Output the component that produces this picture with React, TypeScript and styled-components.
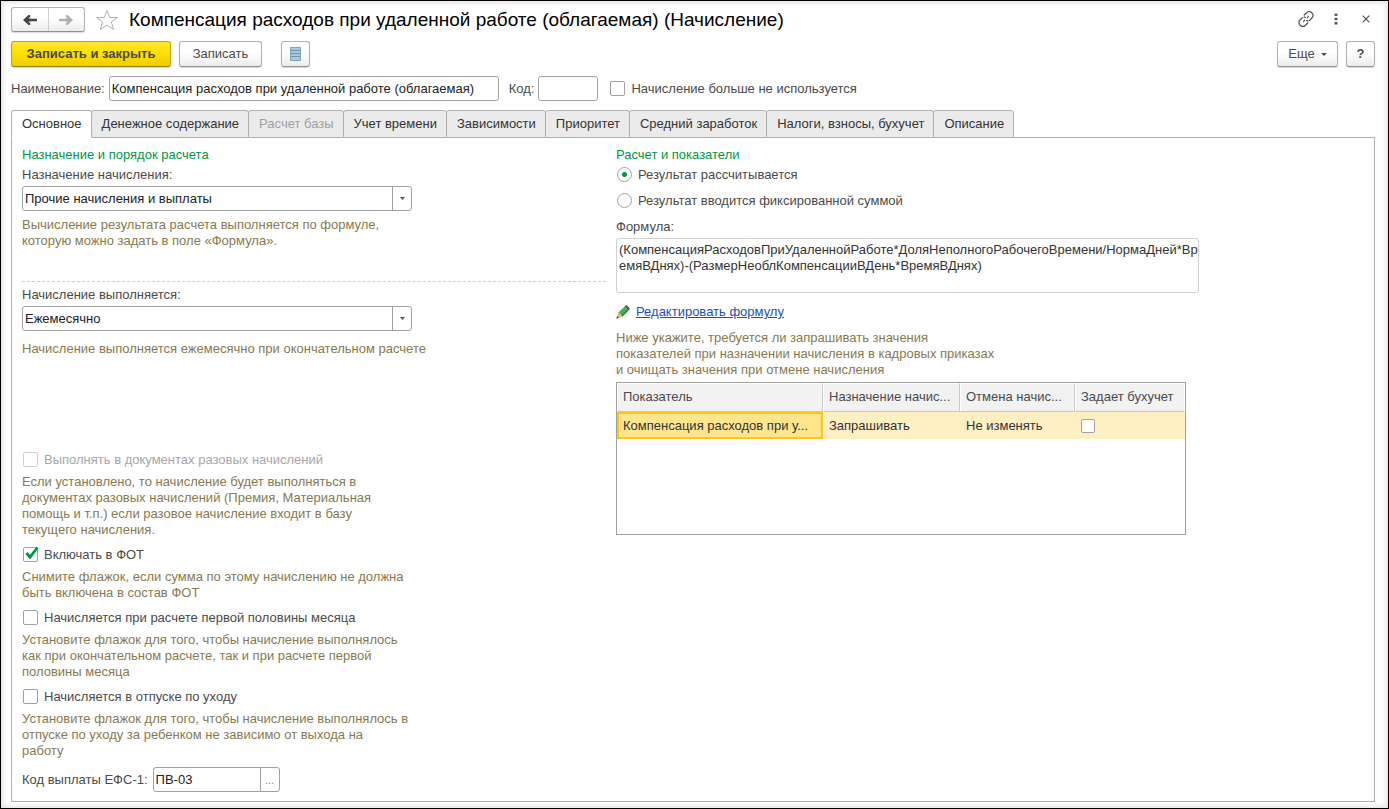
import React, { useState } from "react";
import styled, { createGlobalStyle, css } from "styled-components";

const GlobalStyle = createGlobalStyle`
  *, *::before, *::after { box-sizing: border-box; }
  body {
    margin: 0;
    background: #fff;
    color: #4a4a4a;
    font: 13px/16px "Liberation Sans", Arial, sans-serif;
  }
  button, input, select, textarea { font: inherit; color: inherit; margin: 0; }
  svg { flex: none; }
`;

const Window = styled.main`
  display: flex;
  flex-direction: column;
  min-height: 100vh;
  padding: 6px 13px 6px 10px;
  border: 1px solid #000;
  box-shadow: inset 0 0 5px 2px #e4e4e4;
`;

const TitleBar = styled.header`
  display: flex;
  align-items: center;
  height: 25px;
`;

const raised = css`
  border: 1px solid #b0b0b0;
  border-bottom-color: #8f8f8f;
  border-radius: 3px;
  background: linear-gradient(#fff 45%, #ececec);
  box-shadow: 0 1px 1px #d8d8d8;
`;

const NavGroup = styled.nav`
  ${raised}
  display: flex;
  width: 74px;
  height: 25px;
`;

const NavButton = styled.button`
  flex: 1;
  display: grid;
  place-items: center;
  padding: 0;
  border: 0;
  background: none;
  & + & { border-left: 1px solid #cfcfcf; }
`;

const StarButton = styled.button`
  display: grid;
  place-items: center;
  width: 24px;
  height: 24px;
  margin: 0 10px;
  padding: 0;
  border: 0;
  background: none;
`;

const Title = styled.h1`
  flex: 1;
  margin: 0;
  color: #000;
  font-size: 19px;
  font-weight: 400;
  line-height: 24px;
`;

const WindowTools = styled.div`
  display: flex;
  align-self: flex-start;
  gap: 12px;
`;

const ToolIcon = styled.button`
  display: grid;
  place-items: center;
  width: 18px;
  height: 24px;
  padding: 0;
  border: 0;
  background: none;
`;

const CommandBar = styled.div`
  display: flex;
  align-items: center;
  gap: 8px;
  margin-top: 9px;
`;

const Button = styled.button<{ $primary?: boolean; $width: number }>`
  ${raised}
  display: flex;
  align-items: center;
  justify-content: center;
  gap: 6px;
  height: 26px;
  width: ${(p) => p.$width}px;
  padding: 0;
  ${(p) =>
    p.$primary &&
    css`
      border-color: #bfa300;
      border-bottom-color: #978100;
      background: linear-gradient(#ffe92e, #ffde00 50%, #efcd00);
      font-weight: 700;
    `}
`;

const Spacer = styled.div<{ $width?: number }>`
  ${(p) => (p.$width ? `width: ${p.$width}px;` : "flex: 1;")}
`;

const FieldRow = styled.div<{ $top: number; $gap: number }>`
  display: flex;
  align-items: center;
  gap: ${(p) => p.$gap}px;
  margin-top: ${(p) => p.$top}px;
`;

const field = css`
  height: 25px;
  border: 1px solid #a0a0a0;
  border-radius: 3px;
  background: #fff;
  color: #222;
  outline: 0;
`;

const TextInput = styled.input<{ $width: number }>`
  ${field}
  width: ${(p) => p.$width}px;
  padding: 0 2px;
`;

const Label = styled.label<{ $top?: number }>`
  display: block;
  margin-top: ${(p) => p.$top ?? 0}px;
`;

const CheckLabel = styled.label<{ $disabled?: boolean }>`
  display: flex;
  align-items: flex-start;
  gap: 6px;
  height: 16px;
  padding-left: 1px;
  color: ${(p) => (p.$disabled ? "#a6a6a6" : "inherit")};
`;

const BoxWrap = styled.span`
  position: relative;
  display: inline-flex;
  width: 15px;
  height: 15px;
  svg {
    position: absolute;
    left: 1px;
    bottom: 2px;
    pointer-events: none;
  }
`;

const Box = styled.input`
  appearance: none;
  width: 15px;
  height: 15px;
  border: 1px solid #a0a0a0;
  border-radius: 2px;
  background: #fff;
  &:disabled { border-color: #cfcfcf; }
`;

const Radio = styled.input`
  appearance: none;
  width: 15px;
  height: 15px;
  border: 1px solid #a0a0a0;
  border-radius: 50%;
  background: #fff;
  &:checked { background: radial-gradient(circle, #009646 2px, #fff 3px); }
`;

const TabList = styled.div`
  display: flex;
  margin-top: 9px;
`;

const Tab = styled.button<{ $active: boolean }>`
  height: 28px;
  margin: 0 -1px -1px 0;
  padding: 0 9px 0 10px;
  border: 1px solid #b0b0b0;
  border-radius: 3px 3px 0 0;
  background: #ebebeb;
  color: #333;
  white-space: nowrap;
  z-index: 0;
  &:disabled { color: #a0a0a0; }
  ${(p) =>
    p.$active &&
    css`
      z-index: 1;
      background: #fff;
      border-bottom-color: #fff;
    `}
`;

const Panel = styled.section`
  flex: 1;
  display: grid;
  grid-template-columns: minmax(0, 584fr) minmax(0, 748fr);
  align-items: start;
  gap: 10px;
  padding: 9px 10px 8px;
  border: 1px solid #b0b0b0;
`;

const Column = styled.div`
  display: flex;
  flex-direction: column;
`;

const Heading = styled.h2`
  margin: 0 0 4px;
  color: #009646;
  font-size: 13px;
  font-weight: 400;
  line-height: 16px;
`;

const Hint = styled.p<{ $top?: number }>`
  margin: ${(p) => p.$top ?? 6}px 0 0;
  color: #86794f;
  white-space: pre-line;
`;

const SelectWrap = styled.div`
  position: relative;
  width: 390px;
  max-width: 100%;
  margin-top: 3px;
`;

const Select = styled.select`
  ${field}
  display: block;
  appearance: none;
  width: 100%;
  padding: 0 22px 0 2px;
`;

const SelectArrow = styled.span`
  position: absolute;
  top: 1px;
  right: 1px;
  bottom: 1px;
  display: grid;
  place-items: center;
  width: 19px;
  border-left: 1px solid #a0a0a0;
  pointer-events: none;
`;

const PurposeBlock = styled.div`
  min-height: 115px;
  border-bottom: 1px dashed #cfcfcf;
`;

const ScheduleBlock = styled.div`
  min-height: 170px;
`;

const Checks = styled.div`
  display: flex;
  flex-direction: column;
  gap: 9px;
`;

const PickField = styled.div`
  ${field}
  display: flex;
  width: 127px;
  input {
    flex: 1;
    min-width: 0;
    padding: 0 2px;
    border: 0;
    background: none;
    outline: 0;
  }
  button {
    width: 19px;
    padding: 0;
    border: 0;
    border-left: 1px solid #a0a0a0;
    background: none;
    color: #888;
    font-size: 11px;
  }
`;

const Radios = styled.div`
  display: flex;
  flex-direction: column;
  gap: 10px;
`;

const Formula = styled.textarea`
  display: block;
  width: 583px;
  max-width: 100%;
  height: 55px;
  margin-top: 3px;
  padding: 3px 0 3px 2px;
  border: 1px solid #d0d0d0;
  border-radius: 3px;
  color: #333;
  word-break: break-all;
  overflow: hidden;
  resize: none;
  outline: 0;
`;

const EditLink = styled.a`
  display: flex;
  align-items: center;
  align-self: flex-start;
  gap: 6px;
  margin-top: 11px;
  color: #1a4fb5;
  text-decoration: none;
  span { text-decoration: underline; }
`;

const TableFrame = styled.div`
  width: 570px;
  max-width: 100%;
  height: 153px;
  margin-top: 4px;
  border: 1px solid #a0a0a0;
`;

const Table = styled.table`
  width: 100%;
  table-layout: fixed;
  border-collapse: separate;
  border-spacing: 0;
  text-align: left;
  th, td {
    padding: 0 6px;
    overflow: hidden;
    white-space: nowrap;
  }
  th {
    height: 29px;
    border: 1px solid #fff;
    border-right-color: #c8c8c8;
    border-bottom-color: #c8c8c8;
    padding: 0 5px 2px;
    background: #f2f2f2;
    font-weight: 400;
  }
  th:last-child { border-right-color: #fff; }
  td {
    height: 27px;
    background: #fff0c4;
    color: #333;
  }
  td:first-child {
    padding: 0 4px;
    border: 2px solid #fcc71d;
    background: #ffe68c;
  }
  td input { display: block; width: 14px; height: 14px; }
`;

const BackArrow = ({ color }: { color: string }) => (
  <svg width="14" height="12" viewBox="0 0 14 12" fill={color}>
    <path d="M0 6 5.500 1h1.700v3.700H14v2.600H7.200V11H5.500z" />
    <path fill="#fbfbfb" d="M5.500 3.800 7.200 2.400v2.300H6zM5.500 8.200l1.700 1.400V7.300H6z" opacity=".6" />
  </svg>
);

const ForwardArrow = ({ color }: { color: string }) => (
  <svg width="14" height="12" viewBox="0 0 14 12" fill={color}>
    <path d="M14 6 8.500 1H6.800v3.700H0v2.600h6.800V11h1.700z" />
    <path fill="#fbfbfb" d="M8.500 3.800 6.800 2.400v2.300H8zM8.500 8.200 6.800 9.600V7.300H8z" opacity=".6" />
  </svg>
);

const StarIcon = () => (
  <svg width="24" height="22" viewBox="0 0 24 22" fill="none" stroke="#a9b0b6" strokeLinejoin="miter">
    <path d="m12 1.500 2.700 7h7.800l-6.200 4.600 2.400 7.400L12 16l-6.700 4.500 2.400-7.400L1.500 8.500h7.800z" />
  </svg>
);

const LinkIcon = () => (
  <svg width="16" height="16" viewBox="0 0 16 16" fill="none" stroke="#505050" strokeWidth="1.200" strokeLinecap="round">
    <path d="m6.200 4 2.600-2.500a3.300 3.300 0 0 1 4.700 0l.6.600a3.300 3.300 0 0 1 0 4.700l-2.500 2.500M10 9.800 8.600 9.600" />
    <path d="m9.800 12-2.600 2.500a3.300 3.300 0 0 1-4.700 0l-.6-.6a3.300 3.300 0 0 1 0-4.700l2.500-2.500M6 6.200l1.400.2" />
    <path d="m5.400 10.600 1.400-1.400M9.200 6.800l1.400-1.400" />
  </svg>
);

const DotsIcon = () => (
  <svg width="4" height="12" viewBox="0 0 4 12" fill="#606060">
    <path d="M.5.500h3v2.500h-3zM.5 4.800h3v2.500h-3zM.5 9h3v2.500h-3z" />
  </svg>
);

const CloseIcon = () => (
  <svg width="8" height="8" viewBox="0 0 8 8" stroke="#505050" strokeWidth="1.200">
    <path d="m.7.7 6.600 6.600M7.300.7.7 7.300" />
  </svg>
);

const ListIcon = () => (
  <svg width="11" height="14" viewBox="0 0 11 14">
    <path fill="#a9c8de" stroke="#7fa3bd" d="M.5.5h10v13H.5z" />
    <path stroke="#6f97b3" d="M1 3.500h9M1 6.500h9M1 9.500h9" />
  </svg>
);

const Caret = ({ width = 6 }: { width?: number }) => (
  <svg width={width} height="3" viewBox="0 0 6 3" preserveAspectRatio="none">
    <path fill="#505050" d="M0 0h6L3 3z" />
  </svg>
);

const Tick = () => (
  <svg width="15" height="14" viewBox="0 0 15 14" fill="none">
    <path d="m2.500 7 3.500 4.200L13.500 1.500" stroke="#009646" strokeWidth="2.800" />
  </svg>
);

const PencilIcon = () => (
  <svg width="14" height="14" viewBox="0 0 14 14">
    <path fill="#4dae5b" d="m2.400 7.600 6.200-6.100 3.900 3.900L6.400 11.600z" />
    <path fill="#2f8a42" d="m5.200 10.400 6.100-6.200 1.200 1.200-6.100 6.200z" />
    <path fill="#55575f" d="m8.600 1.500.9-.9c.5-.5 1-.5 1.500 0l2.400 2.400c.5.5.5 1 0 1.500l-.9.900z" />
    <path fill="#e5b56b" d="m2.400 7.600 4 4-5.200 1.600z" />
    <path fill="#444" d="m1.200 11-.8 2.700 2.700-.9z" />
  </svg>
);

interface CheckProps {
  label: string;
  initial?: boolean;
  disabled?: boolean;
}

function Check({ label, initial = false, disabled }: CheckProps) {
  const [checked, setChecked] = useState(initial);
  return (
    <CheckLabel $disabled={disabled}>
      <BoxWrap>
        <Box type="checkbox" checked={checked} disabled={disabled} onChange={() => setChecked(!checked)} />
        {checked && <Tick />}
      </BoxWrap>
      {label}
    </CheckLabel>
  );
}

function DropDown({ id, value }: { id: string; value: string }) {
  return (
    <SelectWrap>
      <Select id={id} defaultValue={value}>
        <option>{value}</option>
      </Select>
      <SelectArrow>
        <Caret width={5} />
      </SelectArrow>
    </SelectWrap>
  );
}

const tabs = [
  "Основное",
  "Денежное содержание",
  "Расчет базы",
  "Учет времени",
  "Зависимости",
  "Приоритет",
  "Средний заработок",
  "Налоги, взносы, бухучет",
  "Описание",
];

const checks = [
  {
    label: "Выполнять в документах разовых начислений",
    disabled: true,
    hint: "Если установлено, то начисление будет выполняться в\nдокументах разовых начислений (Премия, Материальная\nпомощь и т.п.) если разовое начисление входит в базу\nтекущего начисления.",
  },
  {
    label: "Включать в ФОТ",
    initial: true,
    hint: "Снимите флажок, если сумма по этому начислению не должна\nбыть включена в состав ФОТ",
  },
  {
    label: "Начисляется при расчете первой половины месяца",
    hint: "Установите флажок для того, чтобы начисление выполнялось\nкак при окончательном расчете, так и при расчете первой\nполовины месяца",
  },
  {
    label: "Начисляется в отпуске по уходу",
    hint: "Установите флажок для того, чтобы начисление выполнялось в\nотпуске по уходу за ребенком не зависимо от выхода на\nработу",
  },
];

export default function App() {
  const [active, setActive] = useState(0);
  return (
    <>
      <GlobalStyle />
      <Window>
        <TitleBar>
          <NavGroup>
            <NavButton aria-label="Назад"><BackArrow color="#444" /></NavButton>
            <NavButton aria-label="Вперед"><ForwardArrow color="#b0b0b0" /></NavButton>
          </NavGroup>
          <StarButton aria-label="Избранное"><StarIcon /></StarButton>
          <Title>Компенсация расходов при удаленной работе (облагаемая) (Начисление)</Title>
          <WindowTools>
            <ToolIcon aria-label="Ссылка"><LinkIcon /></ToolIcon>
            <ToolIcon aria-label="Меню"><DotsIcon /></ToolIcon>
            <ToolIcon aria-label="Закрыть"><CloseIcon /></ToolIcon>
          </WindowTools>
        </TitleBar>

        <CommandBar>
          <Button $primary $width={160}>Записать и закрыть</Button>
          <Button $width={83}>Записать</Button>
          <Spacer $width={3} />
          <Button $width={29} aria-label="Список"><ListIcon /></Button>
          <Spacer />
          <Button $width={61}>Еще <Caret /></Button>
          <Button $width={29}><b>?</b></Button>
        </CommandBar>

        <FieldRow $top={9} $gap={4}>
          <label htmlFor="name">Наименование:</label>
          <TextInput id="name" $width={390} defaultValue="Компенсация расходов при удаленной работе (облагаемая)" />
          <Spacer $width={2} />
          <label htmlFor="code">Код:</label>
          <TextInput id="code" $width={60} />
          <Spacer $width={3} />
          <Check label="Начисление больше не используется" />
        </FieldRow>

        <TabList role="tablist">
          {tabs.map((name, i) => (
            <Tab key={name} role="tab" aria-selected={i === active} $active={i === active} disabled={i === 2} onClick={() => setActive(i)}>
              {name}
            </Tab>
          ))}
        </TabList>

        <Panel>
          <Column>
            <Heading>Назначение и порядок расчета</Heading>
            <PurposeBlock>
              <Label htmlFor="purpose">Назначение начисления:</Label>
              <DropDown id="purpose" value="Прочие начисления и выплаты" />
              <Hint>{"Вычисление результата расчета выполняется по формуле,\nкоторую можно задать в поле «Формула»."}</Hint>
            </PurposeBlock>
            <ScheduleBlock>
              <Label htmlFor="schedule" $top={5}>Начисление выполняется:</Label>
              <DropDown id="schedule" value="Ежемесячно" />
              <Hint $top={10}>Начисление выполняется ежемесячно при окончательном расчете</Hint>
            </ScheduleBlock>
            <Checks>
              {checks.map(({ hint, ...check }) => (
                <div key={check.label}>
                  <Check {...check} />
                  <Hint>{hint}</Hint>
                </div>
              ))}
            </Checks>
            <FieldRow $top={8} $gap={5}>
              <label htmlFor="payCode">Код выплаты ЕФС-1:</label>
              <PickField>
                <input id="payCode" defaultValue="ПВ-03" />
                <button aria-label="Выбрать">...</button>
              </PickField>
            </FieldRow>
          </Column>

          <Column>
            <Heading>Расчет и показатели</Heading>
            <Radios>
              <CheckLabel>
                <Radio type="radio" name="result" defaultChecked />
                Результат рассчитывается
              </CheckLabel>
              <CheckLabel>
                <Radio type="radio" name="result" />
                Результат вводится фиксированной суммой
              </CheckLabel>
            </Radios>
            <Label htmlFor="formula" $top={10}>Формула:</Label>
            <Formula
              id="formula"
              spellCheck={false}
              defaultValue="(КомпенсацияРасходовПриУдаленнойРаботе*ДоляНеполногоРабочегоВремени/НормаДней*ВремяВДнях)-(РазмерНеоблКомпенсацииВДень*ВремяВДнях)"
            />
            <EditLink href="#formula"><PencilIcon /><span>Редактировать формулу</span></EditLink>
            <Hint $top={10}>{"Ниже укажите, требуется ли запрашивать значения\nпоказателей при назначении начисления в кадровых приказах\nи очищать значения при отмене начисления"}</Hint>
            <TableFrame>
              <Table>
                <colgroup>
                  <col width="206" />
                  <col width="137" />
                  <col width="115" />
                  <col />
                </colgroup>
                <thead>
                  <tr>
                    <th>Показатель</th>
                    <th>Назначение начис...</th>
                    <th>Отмена начис...</th>
                    <th>Задает бухучет</th>
                  </tr>
                </thead>
                <tbody>
                  <tr>
                    <td>Компенсация расходов при у...</td>
                    <td>Запрашивать</td>
                    <td>Не изменять</td>
                    <td><Box type="checkbox" aria-label="Задает бухучет" /></td>
                  </tr>
                </tbody>
              </Table>
            </TableFrame>
          </Column>
        </Panel>
      </Window>
    </>
  );
}
